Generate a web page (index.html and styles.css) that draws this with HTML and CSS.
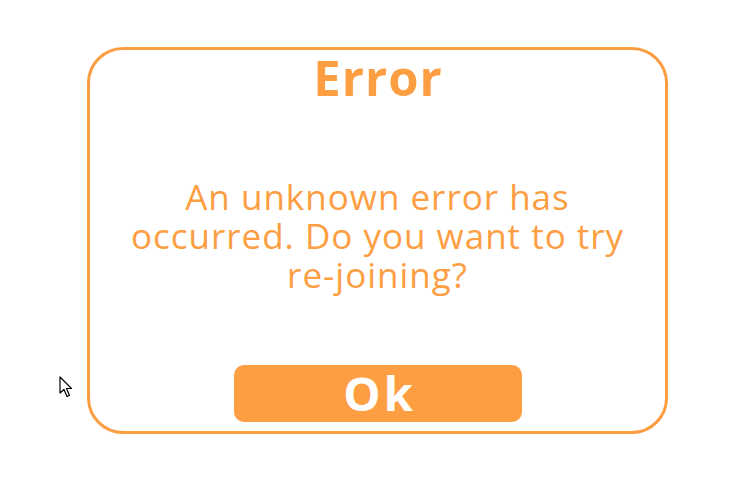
FILE: index.html
```html
<!DOCTYPE html>
<html>
<head>
<meta charset="utf-8">
<link rel="stylesheet" href="styles.css">
</head>
<body>
<div class="dialog">
  <div class="title">Error</div>
  <div class="message">An unknown error has occurred. Do you want to try re-joining?</div>
  <div class="ok">Ok</div>
</div>
<svg class="cursor" width="16" height="24" viewBox="0 0 16 24">
  <path d="M1 1 L1 17 L5 13.5 L8 20.5 L10.5 19.5 L7.5 12.5 L12.5 12.5 Z" fill="#fff" stroke="#000" stroke-width="1.2" stroke-linejoin="round"/>
</svg>
</body>
</html>
```
FILE: styles.css
```css
html, body {
  margin: 0;
  padding: 0;
  background: #fff;
}
body {
  width: 747px;
  height: 495px;
  position: relative;
  overflow: hidden;
  font-family: "Open Sans", "DejaVu Sans", sans-serif;
}
.dialog {
  box-sizing: border-box;
  margin: 47px 0 0 87px;
  width: 581px;
  height: 387px;
  border: 3px solid #fc9d42;
  border-radius: 36px;
  display: flex;
  flex-direction: column;
  align-items: center;
  color: #fd9e43;
}
.title {
  font-size: 49px;
  font-weight: 700;
  line-height: 48px;
  letter-spacing: 1px;
  padding-left: 1px;
  margin-top: 3px;
}
.message {
  margin-top: 76px;
  width: 512px;
  text-align: center;
  font-size: 35px;
  font-weight: 500;
  letter-spacing: 1px;
  line-height: 39px;
}
.ok {
  box-sizing: border-box;
  margin-top: auto;
  margin-bottom: 9px;
  width: 288px;
  height: 57px;
  padding-left: 4px;
  border-radius: 10px;
  background: #fd9e43;
  color: #fff;
  font-size: 47px;
  font-weight: 700;
  letter-spacing: 3px;
  line-height: 57px;
  text-align: center;
}
.cursor {
  position: absolute;
  left: 59px;
  top: 376px;
}
```
